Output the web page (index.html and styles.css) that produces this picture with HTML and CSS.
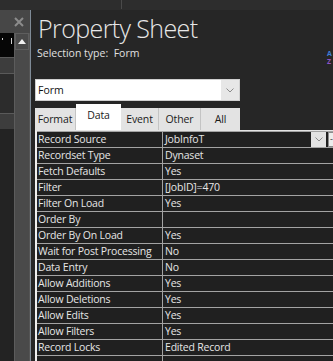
FILE: index.html
```html
<!DOCTYPE html>
<html lang="en">
<head>
    <meta charset="UTF-8">
    <meta name="viewport" content="width=device-width, initial-scale=1.0">
    <title>Property Sheet</title>
    <link rel="stylesheet" href="styles.css">
</head>

<body>

    <div class="topbar">
        <span class="topbar-sep"></span>
    </div>

    <div class="main">
        <aside class="side">
            <div class="side-head">
                <svg class="close-icon" width="10" height="10" viewBox="0 0 10 10">
                    <path d="M1 1 L9 9 M9 1 L1 9" stroke="#8c8c8c" stroke-width="2" fill="none"/>
                </svg>
            </div>
            <div class="side-body">
                <div class="side-list">
                    <div class="side-black"><i class="tick tick-a"></i><i class="tick tick-b"></i></div>
                    <div class="side-row"></div>
                    <div class="side-dark"></div>
                    <div class="side-row"></div>
                </div>
                <div class="scrollbar">
                    <div class="scroll-up">
                        <svg width="8" height="5" viewBox="0 0 8 5"><path d="M0 5 L4 0 L8 5 Z" fill="#f2f2f2"/></svg>
                    </div>
                </div>
            </div>
        </aside>

        <section class="sheet">
            <h1 class="sheet-title">Property Sheet</h1>
            <div class="selection">
                <span>Selection type:&nbsp; Form</span>
                <span class="sort-icon"><b class="az-a">A</b><b class="az-z">Z</b></span>
            </div>

            <div class="combo">
                <span class="combo-text">Form</span>
                <span class="combo-btn">
                    <svg width="8" height="5" viewBox="0 0 8 5"><path d="M0.5 0.5 L4 4 L7.5 0.5" stroke="#8a8a8a" fill="none"/></svg>
                </span>
            </div>

            <div class="tabs">
                <div class="tab tab-format">Format</div>
                <div class="tab tab-data active">Data</div>
                <div class="tab tab-event">Event</div>
                <div class="tab tab-other">Other</div>
                <div class="tab tab-all">All</div>
            </div>

            <div class="tab-page">
                <div class="prop-row">
                    <div class="prop-name">Record Source</div>
                    <div class="prop-value">
                        <span>JobInfoT</span>
                        <span class="value-btn">
                            <svg width="8" height="5" viewBox="0 0 8 5"><path d="M0.5 0.5 L4 4 L7.5 0.5" stroke="#8a8a8a" fill="none"/></svg>
                        </span>
                        <span class="build-btn">-</span>
                    </div>
                </div>
                <div class="prop-row"><div class="prop-name">Recordset Type</div><div class="prop-value">Dynaset</div></div>
                <div class="prop-row"><div class="prop-name">Fetch Defaults</div><div class="prop-value">Yes</div></div>
                <div class="prop-row"><div class="prop-name">Filter</div><div class="prop-value">[JobID]=470</div></div>
                <div class="prop-row"><div class="prop-name">Filter On Load</div><div class="prop-value">Yes</div></div>
                <div class="prop-row"><div class="prop-name">Order By</div><div class="prop-value"></div></div>
                <div class="prop-row"><div class="prop-name">Order By On Load</div><div class="prop-value">Yes</div></div>
                <div class="prop-row"><div class="prop-name">Wait for Post Processing</div><div class="prop-value">No</div></div>
                <div class="prop-row"><div class="prop-name">Data Entry</div><div class="prop-value">No</div></div>
                <div class="prop-row"><div class="prop-name">Allow Additions</div><div class="prop-value">Yes</div></div>
                <div class="prop-row"><div class="prop-name">Allow Deletions</div><div class="prop-value">Yes</div></div>
                <div class="prop-row"><div class="prop-name">Allow Edits</div><div class="prop-value">Yes</div></div>
                <div class="prop-row"><div class="prop-name">Allow Filters</div><div class="prop-value">Yes</div></div>
                <div class="prop-row"><div class="prop-name">Record Locks</div><div class="prop-value">Edited Record</div></div>
                <div class="prop-row"><div class="prop-name"></div><div class="prop-value"></div></div>
            </div>
        </section>
    </div>

</body>
</html>
```

FILE: styles.css
```css
* {
    margin: 0;
    padding: 0;
    box-sizing: border-box;
    font-family: 'Open Sans', 'Noto Sans', sans-serif;
}

body {
    background-color: #262626;
    width: 333px;
    height: 361px;
    overflow: hidden;
}

/* window strip at the very top */
.topbar {
    height: 10px;
    background: #2d2d2d;
    position: relative;
}

.topbar-sep {
    position: absolute;
    left: 121px;
    top: 0;
    width: 1px;
    height: 9px;
    background: #4a4a4a;
}

.main {
    display: flex;
    height: 351px;
}

/* left neighbour pane */
.side {
    width: 30px;
    flex-shrink: 0;
    display: flex;
    flex-direction: column;
}

.side-head {
    height: 23px;
    background: #474747;
    display: flex;
    align-items: center;
    justify-content: flex-end;
    padding-right: 6px;
}

.side-body {
    flex: 1;
    display: flex;
}

.side-list {
    width: 14px;
    background: #232323;
}

.side-black {
    height: 24px;
    background: #060606;
    position: relative;
}

.tick {
    position: absolute;
    top: 5px;
    width: 1px;
    background: #cfcfcf;
}

.tick-a {
    left: 2px;
    height: 2px;
}

.tick-b {
    left: 11px;
    height: 6px;
}

.side-row {
    height: 16px;
    background: #3d3d3d;
    border-top: 1px solid #5a5a5a;
}

.side-dark {
    height: 40px;
    background: #2c2c2c;
    border-top: 1px solid #5a5a5a;
}

.scrollbar {
    width: 16px;
    background: #4a4a4a;
    border-left: 1px solid #5c5c5c;
    border-right: 1px solid #555;
}

.scroll-up {
    height: 17px;
    border: 1px solid #5e5e5e;
    display: flex;
    align-items: center;
    justify-content: center;
}

/* property sheet pane */
.sheet {
    flex: 1;
    border-left: 1px solid #7f8b97;
    padding: 3px 0 0 4px;
    overflow: hidden;
    color: #e6e6e6;
}

.sheet-title {
    font-size: 25px;
    font-weight: 300;
    line-height: 30px;
    margin-left: 3px;
    color: #e8e8e8;
    letter-spacing: -0.6px;
}

.selection {
    display: flex;
    justify-content: space-between;
    align-items: flex-start;
    margin-top: 3px;
    font-size: 10.5px;
    line-height: 14px;
    padding-left: 2px;
    color: #e0e0e0;
}

.sort-icon {
    display: flex;
    flex-direction: column;
    width: 6px;
    margin-top: 4px;
    font-size: 7px;
    line-height: 8px;
    font-family: 'DejaVu Sans', sans-serif;
}

.az-a {
    color: #3f7fd6;
}

.az-z {
    color: #8d52c4;
}

.combo {
    margin-top: 13px;
    width: 205px;
    height: 22px;
    background: #fff;
    border: 1px solid #d0d0d0;
    display: flex;
    align-items: center;
    font-size: 10.5px;
    color: #111;
}

.combo-text {
    flex: 1;
    padding-left: 2px;
}

.combo-btn {
    width: 18px;
    height: 20px;
    background: #e7e7e7;
    display: flex;
    align-items: center;
    justify-content: center;
}

/* tabs */
.tabs {
    display: flex;
    align-items: flex-end;
    margin-top: 2px;
    height: 27px;
    font-size: 10.5px;
    color: #1a1a1a;
}

.tab {
    height: 22px;
    background: #e3e3e3;
    border-right: 1px solid #c4c4c4;
    display: flex;
    align-items: center;
    justify-content: center;
    letter-spacing: -0.1px;
}

.tab.active {
    height: 26px;
    background: #fff;
    align-items: flex-start;
    padding-top: 4px;
    border-right: none;
}

.tab-format { width: 41px; }
.tab-data { width: 45px; }
.tab-event { width: 38px; }
.tab-other { width: 42px; }
.tab-all { width: 39px; border-right: none; }

/* property grid */
.tab-page {
    width: 302px;
    border-left: 2px solid #efefef;
    border-top: 1px solid #e4e4e4;
    background: #202020;
}

.prop-row {
    display: grid;
    grid-template-columns: 126px 1fr;
    height: 16px;
    border-top: 1px solid #a3a3a3;
    font-size: 10.5px;
    line-height: 15px;
    color: #e6e6e6;
}

.prop-name {
    padding-left: 1px;
    border-right: 1px solid #a3a3a3;
    white-space: nowrap;
    letter-spacing: -0.2px;
}

.prop-value {
    padding-left: 2px;
    display: flex;
    align-items: center;
    letter-spacing: -0.2px;
}

.prop-value span:first-child {
    flex: 1;
}

.value-btn {
    width: 15px;
    height: 15px;
    background: #e2e2e2;
    display: flex;
    align-items: center;
    justify-content: center;
}

.build-btn {
    width: 9px;
    height: 15px;
    margin-left: 2px;
    background: #ececec;
    border: 1px solid #8a8a8a;
    border-right: none;
    color: #333;
    font-size: 9px;
    line-height: 12px;
    padding-left: 1px;
}
```
